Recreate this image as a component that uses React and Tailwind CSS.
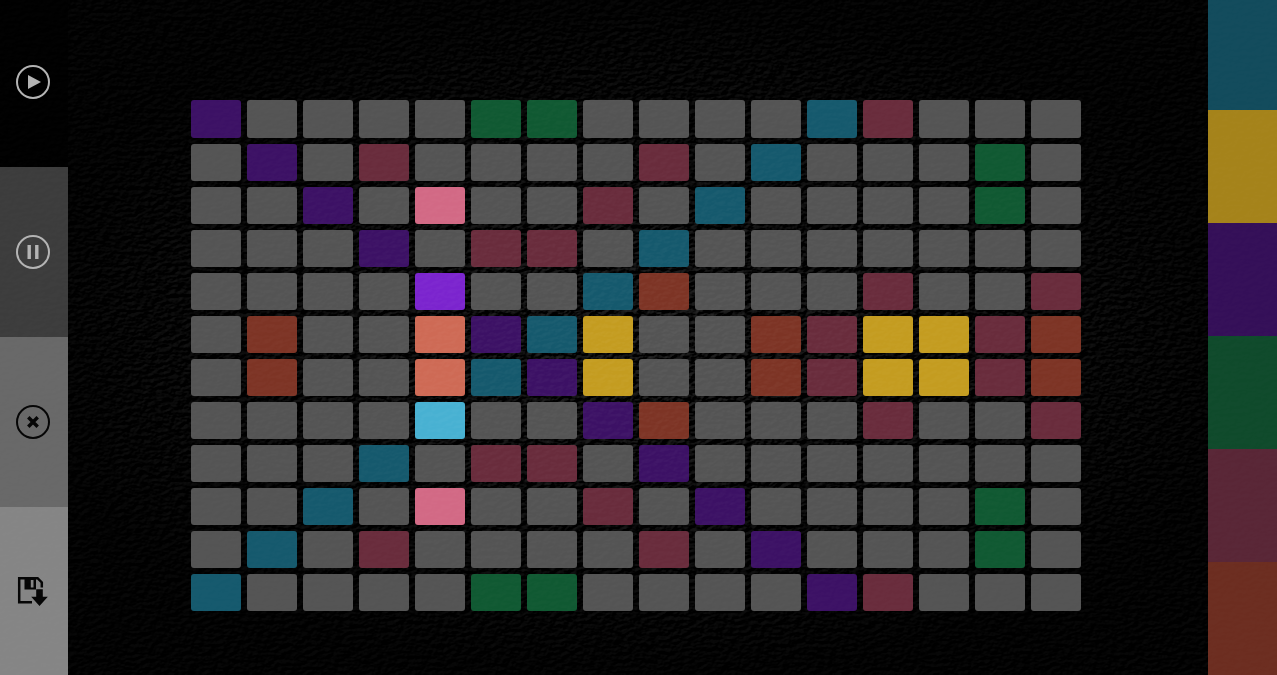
import React, { useState } from "react";

const PATTERN = [
  "p....gg....tm...",
  ".p.m....m.t...g.",
  "..p.K..m.t....g.",
  "...p.mm.t.......",
  "....P..to...m..m",
  ".o..Opty..omyymo",
  ".o..Otpy..omyymo",
  "....T..po...m..m",
  "...t.mm.p.......",
  "..t.K..m.p....g.",
  ".t.m....m.p...g.",
  "t....gg....pm...",
];

const CELL = {
  ".": { name: "empty", cls: "bg-[#545454]" },
  p: { name: "purple", cls: "bg-[#3c1165]" },
  g: { name: "green", cls: "bg-[#105932]" },
  t: { name: "teal", cls: "bg-[#15596d]" },
  m: { name: "maroon", cls: "bg-[#692c3c]" },
  o: { name: "rust", cls: "bg-[#7d3425]" },
  y: { name: "yellow", cls: "bg-[#c49c20]" },
  K: { name: "pink, playing", cls: "bg-[#d26985]" },
  P: { name: "purple, playing", cls: "bg-[#7b24ce]" },
  O: { name: "rust, playing", cls: "bg-[#ce6a55]" },
  T: { name: "teal, playing", cls: "bg-[#48b1d2]" },
};

const SWATCHES = [
  { key: "t", name: "Teal", cls: "grow-110 bg-[#124b5c]" },
  { key: "y", name: "Yellow", cls: "grow-113 bg-[#a5831a]" },
  { key: "p", name: "Purple", cls: "grow-113 bg-[#340f58]" },
  { key: "g", name: "Green", cls: "grow-113 bg-[#0f4a2b]" },
  { key: "m", name: "Maroon", cls: "grow-113 bg-[#592636]" },
  { key: "o", name: "Rust", cls: "grow-113 bg-[#6c2d20]" },
];

function Ring({ children }) {
  return (
    <svg viewBox="0 0 34 34" className="size-[34px]" aria-hidden="true">
      <circle cx="17" cy="17" r="16" fill="none" stroke="currentColor" strokeWidth="2" />
      {children}
    </svg>
  );
}

const PlayIcon = () => (
  <Ring>
    <path d="M12 10v14l13-7z" fill="currentColor" />
  </Ring>
);

const PauseIcon = () => (
  <Ring>
    <path d="M11.5 10h3.4v14h-3.4zM19.1 10h3.4v14h-3.4z" fill="currentColor" />
  </Ring>
);

const ClearIcon = () => (
  <Ring>
    <path d="M12.3 12.3l9.4 9.4M21.7 12.3l-9.4 9.4" stroke="currentColor" strokeWidth="3.5" />
  </Ring>
);

const SaveIcon = () => (
  <svg viewBox="0 0 34 34" className="size-[34px]" aria-hidden="true">
    <path d="M16 28.2H3.2V4.2H21.6L25.8 8.4V13.4" fill="none" stroke="currentColor" strokeWidth="2.5" />
    <path fillRule="evenodd" d="M8.5 3h11.5v12.5H8.5zM14.8 6h2.7v7.4h-2.7z" fill="currentColor" />
    <path d="M20.2 15.2h6.6v7.6h5l-8.3 9.2-8.3-9.2h5z" fill="currentColor" />
  </svg>
);

const ACTIONS = [
  { name: "Play", Icon: PlayIcon, cls: "grow-164 bg-black text-[#b4b4b4] pb-[3px]" },
  { name: "Pause", Icon: PauseIcon, cls: "grow-170 bg-[#3c3c3c] text-[#b4b4b4]" },
  { name: "Clear", Icon: ClearIcon, cls: "grow-170 bg-[#686868] text-[#050505]" },
  { name: "Save", Icon: SaveIcon, cls: "grow-168 bg-[#858585] text-[#050505]" },
];

function Leather({ id, className }) {
  return (
    <svg className={className} aria-hidden="true">
      <defs>
        <filter id={id} x="0" y="0" width="100%" height="100%" colorInterpolationFilters="sRGB">
          <feTurbulence type="fractalNoise" baseFrequency="0.15 0.26" numOctaves="5" seed="8" result="grain" />
          <feDiffuseLighting in="grain" surfaceScale="2.4" lightingColor="#ffffff" result="lit">
            <feDistantLight azimuth="235" elevation="32" />
          </feDiffuseLighting>
          <feColorMatrix
            in="lit"
            type="matrix"
            values="1.5 0 0 0 -0.55  0 1.5 0 0 -0.55  0 0 1.5 0 -0.55  0 0 0 1 0"
          />
        </filter>
        <radialGradient id={`${id}-fade`}>
          <stop offset="0" stopColor="#000" stopOpacity="0" />
          <stop offset="1" stopColor="#000" stopOpacity="0.8" />
        </radialGradient>
      </defs>
      <rect width="100%" height="100%" filter={`url(#${id})`} />
      <rect width="100%" height="100%" fill={`url(#${id}-fade)`} />
    </svg>
  );
}

export default function App() {
  const [rows, setRows] = useState(PATTERN);
  const [color, setColor] = useState("t");

  const paint = (r, c) =>
    setRows((prev) =>
      prev.map((row, i) =>
        i === r ? row.slice(0, c) + (row[c] === "." ? color : ".") + row.slice(c + 1) : row
      )
    );

  const run = (name) => {
    if (name === "Clear") setRows((prev) => prev.map((row) => ".".repeat(row.length)));
  };

  return (
    <div className="relative flex min-h-screen bg-black font-['Liberation_Sans',sans-serif]">
      <Leather id="leather-base" className="pointer-events-none absolute inset-0 size-full opacity-14" />

      <nav aria-label="Transport" className="relative flex w-[68px] shrink-0 flex-col">
        {ACTIONS.map(({ name, Icon, cls }) => (
          <button
            key={name}
            type="button"
            aria-label={name}
            onClick={() => run(name)}
            className={`flex basis-0 cursor-pointer items-center justify-center pr-[2px] ${cls}`}
          >
            <Icon />
          </button>
        ))}
      </nav>

      <main className="relative flex flex-1 items-center justify-center pt-9 pr-1">
        <div className="grid auto-rows-[37px] grid-cols-[repeat(16,50px)] grid-rows-[38px] gap-[6px]">
          {rows.map((row, r) =>
            [...row].map((k, c) => (
              <button
                key={`${r}-${c}`}
                type="button"
                aria-label={`Row ${r + 1}, step ${c + 1}: ${CELL[k].name}`}
                onClick={() => paint(r, c)}
                className={`cursor-pointer rounded-[3px] ${CELL[k].cls}`}
              />
            ))
          )}
        </div>
      </main>

      <aside aria-label="Sounds" className="relative flex w-[69px] shrink-0 flex-col">
        {SWATCHES.map(({ key, name, cls }) => (
          <button
            key={key}
            type="button"
            aria-label={name}
            aria-pressed={color === key}
            onClick={() => setColor(key)}
            className={`basis-0 cursor-pointer ${cls}`}
          />
        ))}
      </aside>

      <Leather id="leather-sheen" className="pointer-events-none absolute inset-0 size-full opacity-4 mix-blend-screen" />
    </div>
  );
}
